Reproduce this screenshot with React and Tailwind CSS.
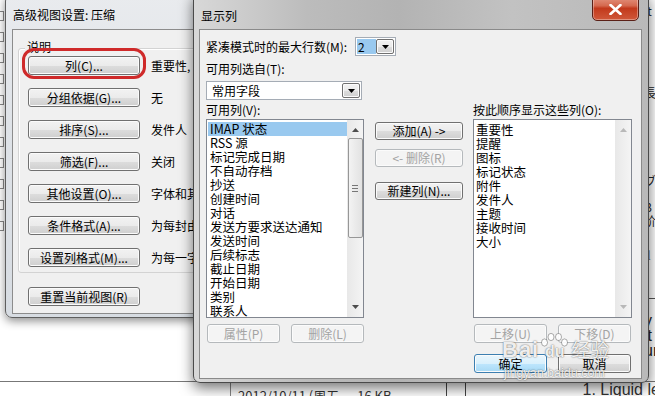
import React from "react";
import clsx from "clsx";

const cjk = "font-['SimSun','Noto_Sans_CJK_SC',sans-serif]";

const Btn = ({ children, className, disabled, def }) => (
  <div
    className={clsx(
      "flex shrink-0 items-center justify-center rounded-[3px] border text-[12px] leading-none shadow-[inset_0_0_0_1px_#fbfbfb]",
      disabled
        ? "border-[#b5b9bc] bg-[#f4f4f4] text-[#a3a3a3]"
        : def
        ? "border-[#3c7fb1] bg-[linear-gradient(#eaf6fd_0%,#d9f0fc_50%,#bee6fd_51%,#a7d9f5_100%)] text-black"
        : "border-[#707070] bg-[linear-gradient(#f2f2f2_0%,#ebebeb_50%,#dddddd_51%,#cfcfcf_100%)] text-black",
      className
    )}
  >
    {children}
  </div>
);

const Arrow = ({ down = true, color = "#000", w = 7, h = 4 }) => (
  <svg width={w} height={h} viewBox="0 0 7 4">
    <path d={down ? "M0 0 H7 L3.5 4 Z" : "M0 4 H7 L3.5 0 Z"} fill={color} />
  </svg>
);

const DropBtn = () => (
  <div className="flex h-full w-[18px] items-center justify-center rounded-[2px] border border-[#707070] bg-[linear-gradient(#f2f2f2_0%,#ebebeb_50%,#dddddd_51%,#cfcfcf_100%)] shadow-[inset_0_0_0_1px_#fbfbfb]">
    <Arrow />
  </div>
);

const available = [
  "IMAP 状态",
  "RSS 源",
  "标记完成日期",
  "不自动存档",
  "抄送",
  "创建时间",
  "对话",
  "发送方要求送达通知",
  "发送时间",
  "后续标志",
  "截止日期",
  "开始日期",
  "类别",
  "联系人",
];

const shown = ["重要性", "提醒", "图标", "标记状态", "附件", "发件人", "主题", "接收时间", "大小"];

const leftRows = [
  ["列(C)...", "重要性,"],
  ["分组依据(G)...", "无"],
  ["排序(S)...", "发件人"],
  ["筛选(F)...", "关闭"],
  ["其他设置(O)...", "字体和其"],
  ["条件格式(A)...", "为每封由"],
  ["设置列格式(M)...", "为每一字"],
];

const LeftDialog = () => (
  <div className="absolute left-[5px] top-[-6px] flex h-[324px] w-[215px] flex-col rounded-[7px] border border-[#5e5e5e] bg-[linear-gradient(#e9ebee,#dfe3e8_40%,#d7dce2)] pl-[6px] shadow-[0_3px_10px_rgba(0,0,0,0.45)]">
    <div className="flex h-[34px] items-center pl-[1px] pt-[5px] text-[12px] text-black">
      高级视图设置: 压缩
    </div>
    <div className="flex h-[285px] flex-col border border-[#8c8c8c] bg-[#f0f0f0] pl-[5px] pt-[18px]">
      <div className="relative flex h-[225px] flex-col gap-[13px] rounded-[3px] border border-[#d3d3d3] pl-[9px] pt-[7px] shadow-[inset_1px_1px_0_#fff]">
        <div className="absolute left-[6px] top-[-9px] bg-[#f0f0f0] px-[2px] text-[12px] leading-[14px]">说明</div>
        {leftRows.map(([b, t]) => (
          <div key={b} className="flex h-[19px] items-center gap-[11px]">
            <Btn className="h-[19px] w-[112px]">{b}</Btn>
            <span className="whitespace-nowrap text-[12px]">{t}</span>
          </div>
        ))}
      </div>
      <div className="mt-[14px] pl-[10px]">
        <Btn className="h-[19px] w-[112px]">重置当前视图(R)</Btn>
      </div>
    </div>
  </div>
);

const Scroll = ({ active }) => (
  <div className="flex h-full w-[16px] flex-col items-center bg-[linear-gradient(to_right,#e8e8e8,#f4f4f4)] py-[8px]">
    <Arrow down={false} color={active ? "#4d4d4d" : "#b8b8b8"} w={7} h={4} />
    {active && (
      <div className="mt-[6px] flex h-[100px] w-[15px] flex-col items-center justify-center gap-[2px] rounded-[2px] border border-[#979797] bg-[linear-gradient(to_right,#f3f3f3,#e2e2e2)]">
        <div className="h-px w-[6px] bg-[#777]" />
        <div className="h-px w-[6px] bg-[#777]" />
        <div className="h-px w-[6px] bg-[#777]" />
      </div>
    )}
    <div className="flex-1" />
    <Arrow color={active ? "#4d4d4d" : "#b8b8b8"} w={7} h={4} />
  </div>
);

const RightDialog = () => (
  <div className="absolute left-[193px] top-[-8px] flex h-[391px] w-[456px] flex-col rounded-[7px] border border-[#4a4a4a] bg-[linear-gradient(to_right,#d8d8d8,#bcbcbc_25%,#b3b3b3_45%,#c2c2c2_70%,#b9b9b9)] pl-[5px] shadow-[0_5px_14px_rgba(0,0,0,0.55)]">
    <div className="relative flex h-[36px] items-center pl-[2px] pt-[9px] text-[12px] text-black">
      显示列
      <div className="absolute right-[9px] top-0 flex h-[28px] w-[47px] items-end justify-center rounded-b-[5px] border border-[#5a2017] bg-[linear-gradient(#e8a593,#d5694f_45%,#c2391c_55%,#d0583a)] pb-[5px] shadow-[inset_0_0_0_1px_rgba(255,255,255,0.35)]">
        <svg width="13" height="11" viewBox="0 0 13 11">
          <path d="M1.5 1 L11.5 10 M11.5 1 L1.5 10" stroke="#fff" strokeWidth="2.6" strokeLinecap="round" />
        </svg>
      </div>
    </div>
    <div className="flex h-[350px] w-[443px] flex-col border border-[#8a8a8a] bg-[#f0f0f0] pl-[6px] pt-[7px] text-[12px] text-black">
      <div className="flex h-[19px] items-center">
        <span className="w-[149px] whitespace-nowrap">紧凑模式时的最大行数(M):</span>
        <div className="flex h-[19px] w-[41px] items-center border border-[#a5acb5] bg-white p-[1px]">
          <span className="flex h-full flex-1 items-center bg-[#99c9ef] pl-[1px] leading-none">2</span>
          <DropBtn />
        </div>
      </div>
      <div className="mt-[4px] flex h-[18px] items-center">可用列选自(T):</div>
      <div className="mt-[3px] flex h-[19px] w-[156px] items-center border border-[#a5acb5] bg-white p-[1px]">
        <span className="flex-1 pl-[4px] leading-none">常用字段</span>
        <DropBtn />
      </div>
      <div className="mt-[1px] flex h-[18px] items-center">
        <span className="w-[267px]">可用列(V):</span>
        <span>按此顺序显示这些列(O):</span>
      </div>
      <div className="flex h-[199px]">
        <div className="flex w-[158px] border border-[#828790] bg-white pl-[1px] pt-[2px]">
          <div className="flex flex-1 flex-col overflow-hidden">
            {available.map((a, i) => (
              <div
                key={a}
                className={clsx("h-[14px] whitespace-nowrap pl-[2px] text-[12.5px] leading-[14px]", i === 0 && "bg-[#99c9ef]")}
              >
                {a}
              </div>
            ))}
          </div>
          <div className="-mt-[2px]">
            <Scroll active />
          </div>
        </div>
        <div className="ml-[11px] flex w-[88px] flex-col pt-[3px]">
          <Btn className="h-[18px] w-[88px]">添加(A) -&gt;</Btn>
          <Btn disabled className="mt-[9px] h-[18px] w-[88px]">&lt;- 删除(R)</Btn>
          <Btn className="mt-[15px] h-[18px] w-[88px]">新建列(N)...</Btn>
        </div>
        <div className="ml-[10px] flex w-[159px] border border-[#828790] bg-white pl-[1px] pt-[3px]">
          <div className="flex flex-1 flex-col">
            {shown.map((s) => (
              <div key={s} className="h-[14px] whitespace-nowrap pl-[1px] text-[12.5px] leading-[14px]">
                {s}
              </div>
            ))}
          </div>
          <div className="-mt-[3px]">
            <Scroll />
          </div>
        </div>
      </div>
      <div className="mt-[6px] flex h-[19px]">
        <Btn disabled className="ml-[1px] h-[19px] w-[73px]">属性(P)</Btn>
        <Btn disabled className="ml-[11px] h-[19px] w-[73px]">删除(L)</Btn>
        <Btn disabled className="ml-[110px] h-[19px] w-[73px]">上移(U)</Btn>
        <Btn disabled className="ml-[11px] h-[19px] w-[73px]">下移(D)</Btn>
      </div>
      <div className="mt-[11px] flex h-[19px] pl-[268px]">
        <Btn def className="h-[19px] w-[73px]">确定</Btn>
        <Btn className="ml-[11px] h-[19px] w-[73px]">取消</Btn>
      </div>
    </div>
  </div>
);

const edgeMarks = [14, 38, 62, 86, 110, 134, 158, 182, 206, 254, 302];

export default function App() {
  return (
    <div className={clsx("relative h-[396px] w-[655px] overflow-hidden bg-white", cjk)}>
      {/* desktop / background window behind the dialogs */}
      <div className="absolute left-0 top-0 h-[320px] w-[5px]">
        {edgeMarks.map((t) => (
          <div key={t} className="mt-[11px] h-[10px] w-[4px] border-y border-r border-[#555] opacity-70 blur-[0.3px]" />
        ))}
      </div>
      <div className="absolute left-[644px] top-0 flex w-[20px] flex-col whitespace-nowrap text-[12px] leading-[14px] text-[#222]">
        <span className="mt-[4px]">it</span>
        <span className="mt-[68px]">長</span>
        <span className="mt-[74px]">ブ</span>
        <span className="mt-[12px]">B</span>
        <span>阶</span>
        <span className="mt-[20px] text-[#777]">il</span>
        <span className="mt-[36px] h-px w-[20px] bg-[#555]" />
        <span className="mt-[14px] font-['Liberation_Sans',sans-serif] text-[16px] leading-[15px]">y</span>
        <span className="font-['Liberation_Sans',sans-serif] text-[16px] leading-[15px]">lt</span>
        <span className="font-['Liberation_Sans',sans-serif] text-[16px] leading-[15px]">ur</span>
      </div>
      <div className="absolute left-0 top-[381px] flex h-[20px] w-[700px] items-start border-t border-[#777] whitespace-nowrap text-[13px] leading-[14px] text-[#333]">
        <span className="ml-[230px] h-full shrink-0 border-l border-[#888]" />
        <span className="ml-[7px] mt-[7px] shrink-0">2012/10/11 (周五</span>
        <span className="ml-[18px] mt-[7px] shrink-0">16 KB</span>
        <span className="ml-[54px] h-full shrink-0 border-l border-[#444]" />
        <span className="ml-[18px] h-full shrink-0 border-l border-[#444]" />
        <span className="ml-[117px] mt-[1px] shrink-0 font-['Liberation_Sans',sans-serif] text-[16px]">1. Liquid lea</span>
      </div>

      <LeftDialog />

      {/* red highlight drawn around the first button */}
      <div className="absolute left-[22px] top-[48px] h-[31px] w-[124px] rounded-[12px] border-[3px] border-[#cf2a2a]" />

      <RightDialog />

      {/* watermark */}
      <div className="pointer-events-none absolute left-[502px] top-[333px] flex flex-col text-white/90 [text-shadow:0_0_1.5px_rgba(0,0,0,0.75)]">
        <div className="flex h-[26px] items-end">
          <span className="font-['Liberation_Sans',sans-serif] text-[22px] font-bold leading-[18px] tracking-[1px]">Bai</span>
          <div className="relative ml-[1px] flex h-[26px] w-[29px] items-end justify-center">
            <svg className="absolute left-0 top-0" width="29" height="14" viewBox="0 0 29 14">
              <g fill="rgba(255,255,255,0.9)" stroke="rgba(0,0,0,0.45)" strokeWidth="0.7">
                <ellipse cx="4.5" cy="9.5" rx="3" ry="3.6" />
                <ellipse cx="11" cy="4" rx="3" ry="3.6" />
                <ellipse cx="18.5" cy="4" rx="3" ry="3.6" />
                <ellipse cx="24.5" cy="9.5" rx="3" ry="3.6" />
              </g>
            </svg>
            <span className="font-['Liberation_Sans',sans-serif] text-[16px] font-bold leading-[15px]">du</span>
          </div>
          <span className={clsx("ml-[2px] text-[19px] leading-[20px]", cjk)}>经验</span>
        </div>
        <span className="mt-[9px] pl-[2px] font-['Liberation_Sans',sans-serif] text-[12.5px] leading-[11px]">jingyan.baidu.com</span>
      </div>
    </div>
  );
}
